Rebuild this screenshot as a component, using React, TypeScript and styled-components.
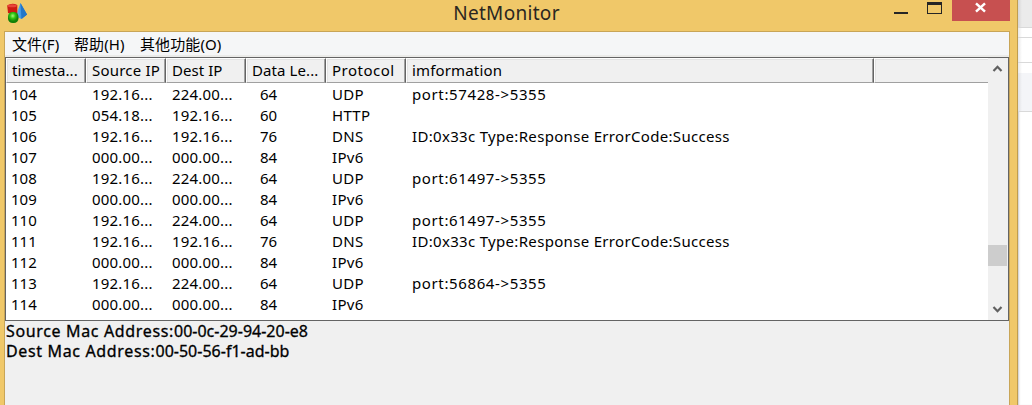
import React from "react";
import styled, { createGlobalStyle } from "styled-components";

const uiFont = `"Noto Sans", "Noto Sans CJK SC", sans-serif`;

const GlobalStyle = createGlobalStyle`
  * { box-sizing: border-box; }
  html, body { margin: 0; padding: 0; overflow: hidden; background: #fff; }
  body { font: 15px/21px ${uiFont}; color: #000; }
`;

const Desktop = styled.div`
  display: flex;
  width: 1032px;
  height: 405px;
  overflow: hidden;
`;

const Window = styled.main`
  display: flex;
  flex-direction: column;
  width: 1018px;
  height: 405px;
  background: #f0c869;
  border-right: 1px solid #bf9d4f;
`;

const TitleBar = styled.header`
  display: grid;
  grid-template-columns: 160px 1fr 160px;
  height: 31px;
  flex: none;
`;

const AppIcon = styled.svg`
  display: block;
  margin: 3px 0 0 6px;
`;

const Title = styled.h1`
  margin: 0;
  padding-right: 4px;
  font-size: 19px;
  font-weight: 400;
  line-height: 27px;
  letter-spacing: 0.3px;
  text-align: center;
  color: #2a2621;
`;

const Controls = styled.div`
  display: flex;
  justify-content: flex-end;
  height: 21px;
  padding-right: 7px;
`;

const ControlButton = styled.button<{ $width: number; $close?: boolean }>`
  width: ${(p) => p.$width}px;
  height: 21px;
  padding: 0;
  border: 0;
  background: ${(p) => (p.$close ? "#c75050" : "transparent")};
  svg { display: block; }
`;

const Client = styled.div`
  display: flex;
  flex-direction: column;
  flex: 1;
  min-height: 0;
  width: 1006px;
  margin-left: 4px;
  border: solid #c8a557;
  border-width: 1px 1px 0;
  background: #f0f0f0;
`;

const MenuBar = styled.nav`
  display: flex;
  gap: 14px;
  height: 25px;
  flex: none;
  padding-left: 7px;
  background: #f5f6f7;
  border-bottom: 2px solid #ebebe9;
`;

const MenuItem = styled.span<{ $width: number }>`
  width: ${(p) => p.$width}px;
  font-size: 15px;
  line-height: 25px;
  letter-spacing: 0.1px;
  white-space: nowrap;
`;

const ListView = styled.section`
  display: flex;
  height: 264px;
  flex: none;
  border: 1px solid #646464;
  background: #fff;
`;

const Table = styled.div`
  width: 982px;
`;

const columns = "80px 80px 80px 80px 80px 468px 114px";

const HeaderRow = styled.div`
  display: grid;
  grid-template-columns: ${columns};
  height: 24px;
  margin-bottom: 2px;
  border-bottom: 1px solid #646464;
`;

const HeaderCell = styled.div<{ $last?: boolean; $spacing: number }>`
  padding-left: 5px;
  background: #f0f0f0;
  border: solid;
  border-width: 1px ${(p) => (p.$last ? 0 : 1)}px 1px 1px;
  border-color: #fff #646464 #a0a0a0 #fff;
  box-shadow: inset ${(p) => (p.$last ? 0 : -1)}px 0 #a0a0a0, inset 1px 1px #e3e3e3;
  line-height: 23px;
  letter-spacing: ${(p) => p.$spacing}px;
  white-space: nowrap;
`;

const Row = styled.div`
  display: grid;
  grid-template-columns: ${columns};
  height: 21px;
`;

const Cell = styled.div<{ $indent: number; $spacing: number }>`
  padding-left: ${(p) => p.$indent}px;
  letter-spacing: ${(p) => p.$spacing}px;
  white-space: pre;
`;

const ScrollBar = styled.div`
  display: flex;
  flex-direction: column;
  width: 20px;
  background: #f0f0f0;
`;

const Track = styled.div`
  flex: 1;
  padding-top: 166px;
`;

const Thumb = styled.div`
  width: 19px;
  height: 21px;
  background: #cdcdcd;
`;

const Arrow = styled.svg`
  display: block;
  flex: none;
`;

const Details = styled.section`
  padding-left: 1px;
  font-size: 16px;
  line-height: 20px;
  white-space: nowrap;
  -webkit-text-stroke: 0.3px #000;
`;

const DetailLine = styled.div``;

const DetailLabel = styled.span`
  letter-spacing: 0.65px;
`;

const Behind = styled.aside`
  width: 14px;
  height: 405px;
  box-shadow: inset 2px 0 2px -1px #c9c9c9;
`;

const Strip = styled.div<{ $height: number; $fill: string }>`
  height: ${(p) => p.$height}px;
  background: linear-gradient(to right, rgba(0, 0, 0, 0.09), transparent 4px), ${(p) => p.$fill};
  border-bottom: 1px solid #d9d9d9;
`;

const rows = [
  ["104", "192.16...", "224.00...", "64", "UDP", "port:57428->5355"],
  ["105", "054.18...", "192.16...", "60", "HTTP", ""],
  ["106", "192.16...", "192.16...", "76", "DNS", "ID:0x33c Type:Response ErrorCode:Success"],
  ["107", "000.00...", "000.00...", "84", "IPv6", ""],
  ["108", "192.16...", "224.00...", "64", "UDP", "port:61497->5355"],
  ["109", "000.00...", "000.00...", "84", "IPv6", ""],
  ["110", "192.16...", "224.00...", "64", "UDP", "port:61497->5355"],
  ["111", "192.16...", "192.16...", "76", "DNS", "ID:0x33c Type:Response ErrorCode:Success"],
  ["112", "000.00...", "000.00...", "84", "IPv6", ""],
  ["113", "192.16...", "224.00...", "64", "UDP", "port:56864->5355"],
  ["114", "000.00...", "000.00...", "84", "IPv6", ""],
];

const headers = [
  { text: "timesta...", spacing: 0.1 },
  { text: "Source IP", spacing: 0.2 },
  { text: "Dest IP", spacing: 0.05 },
  { text: "Data Le...", spacing: 0.1 },
  { text: "Protocol", spacing: 0.5 },
  { text: "imformation", spacing: 0.15 },
  { text: "", spacing: 0 },
];
const indents = [5, 6, 6, 14, 6, 6];
const spacings = [0, 0.2, 0.2, 0, 0.3, 0.62];

const cellSpacing = (text: string, column: number) =>
  text.startsWith("ID:") ? 0.32 : spacings[column];

export default function App() {
  return (
    <Desktop>
      <GlobalStyle />
      <Window>
        <TitleBar>
          <AppIcon width="22" height="22" viewBox="0 0 22 22">
            <defs>
              <linearGradient id="blue"><stop stopColor="#7cc0f5" /><stop offset=".5" stopColor="#3b94e4" /><stop offset="1" stopColor="#155fb8" /></linearGradient>
              <radialGradient id="green" cx=".45" cy=".35"><stop stopColor="#a5f77c" /><stop offset=".5" stopColor="#32c512" /><stop offset="1" stopColor="#138009" /></radialGradient>
            </defs>
            <path d="M14.5 0 L21 11.5 L15.5 16 L9.5 13.5Z" fill="url(#blue)" />
            <path d="M14.5 0 L15.5 16 L21 11.5Z" fill="#2376c9" />
            <path d="M1.2 2.5 Q6 -.8 11.3 2 V10 H2Z" fill="#cc1b12" />
            <ellipse cx="6.2" cy="2.7" rx="4.6" ry="1.5" fill="#e8463a" />
            <rect x="2" y="9" width="10.5" height="11" rx="4.6" fill="url(#green)" />
          </AppIcon>
          <Title>NetMonitor</Title>
          <Controls>
            <ControlButton $width={30} aria-label="Minimize">
              <svg width="30" height="21"><path d="M7 12h14v2H7z" fill="#252525" /></svg>
            </ControlButton>
            <ControlButton $width={35} aria-label="Maximize">
              <svg width="35" height="21" shapeRendering="crispEdges"><path d="M10 2h15v12H10z M11 5v8h13V5z" fillRule="evenodd" fill="#252525" /></svg>
            </ControlButton>
            <ControlButton $width={58} $close aria-label="Close">
              <svg width="58" height="21"><path d="M24 3.3L33 11.7M33 3.3L24 11.7" stroke="#fff" strokeWidth="2.5" /></svg>
            </ControlButton>
          </Controls>
        </TitleBar>
        <Client>
          <MenuBar>
            <MenuItem $width={48}>文件(F)</MenuItem>
            <MenuItem $width={52}>帮助(H)</MenuItem>
            <MenuItem $width={82}>其他功能(O)</MenuItem>
          </MenuBar>
          <ListView>
            <Table>
              <HeaderRow>
                {headers.map((h, i) => (
                  <HeaderCell key={i} $last={i === 6} $spacing={h.spacing}>{h.text}</HeaderCell>
                ))}
              </HeaderRow>
              {rows.map((r) => (
                <Row key={r[0]}>
                  {r.map((c, i) => (
                    <Cell key={i} $indent={indents[i]} $spacing={cellSpacing(c, i)}>{c}</Cell>
                  ))}
                </Row>
              ))}
            </Table>
            <ScrollBar>
              <Arrow width="20" height="21"><path d="M5.5 13L9.5 8.8L13.5 13" fill="none" stroke="#606060" strokeWidth="2.2" /></Arrow>
              <Track><Thumb /></Track>
              <Arrow width="20" height="21"><path d="M5.5 8L9.5 12.2L13.5 8" fill="none" stroke="#606060" strokeWidth="2.2" /></Arrow>
            </ScrollBar>
          </ListView>
          <Details>
            <DetailLine><DetailLabel>Source Mac Address:</DetailLabel>00-0c-29-94-20-e8</DetailLine>
            <DetailLine><DetailLabel>Dest Mac Address:</DetailLabel>00-50-56-f1-ad-bb</DetailLine>
          </Details>
        </Client>
      </Window>
      <Behind>
        <Strip $height={28} $fill="#ebebeb" />
        <Strip $height={10} $fill="#fff" />
        <Strip $height={25} $fill="#fff" />
        <Strip $height={49} $fill="linear-gradient(#fff 10px, #f4f5f8 10px)" />
      </Behind>
    </Desktop>
  );
}
